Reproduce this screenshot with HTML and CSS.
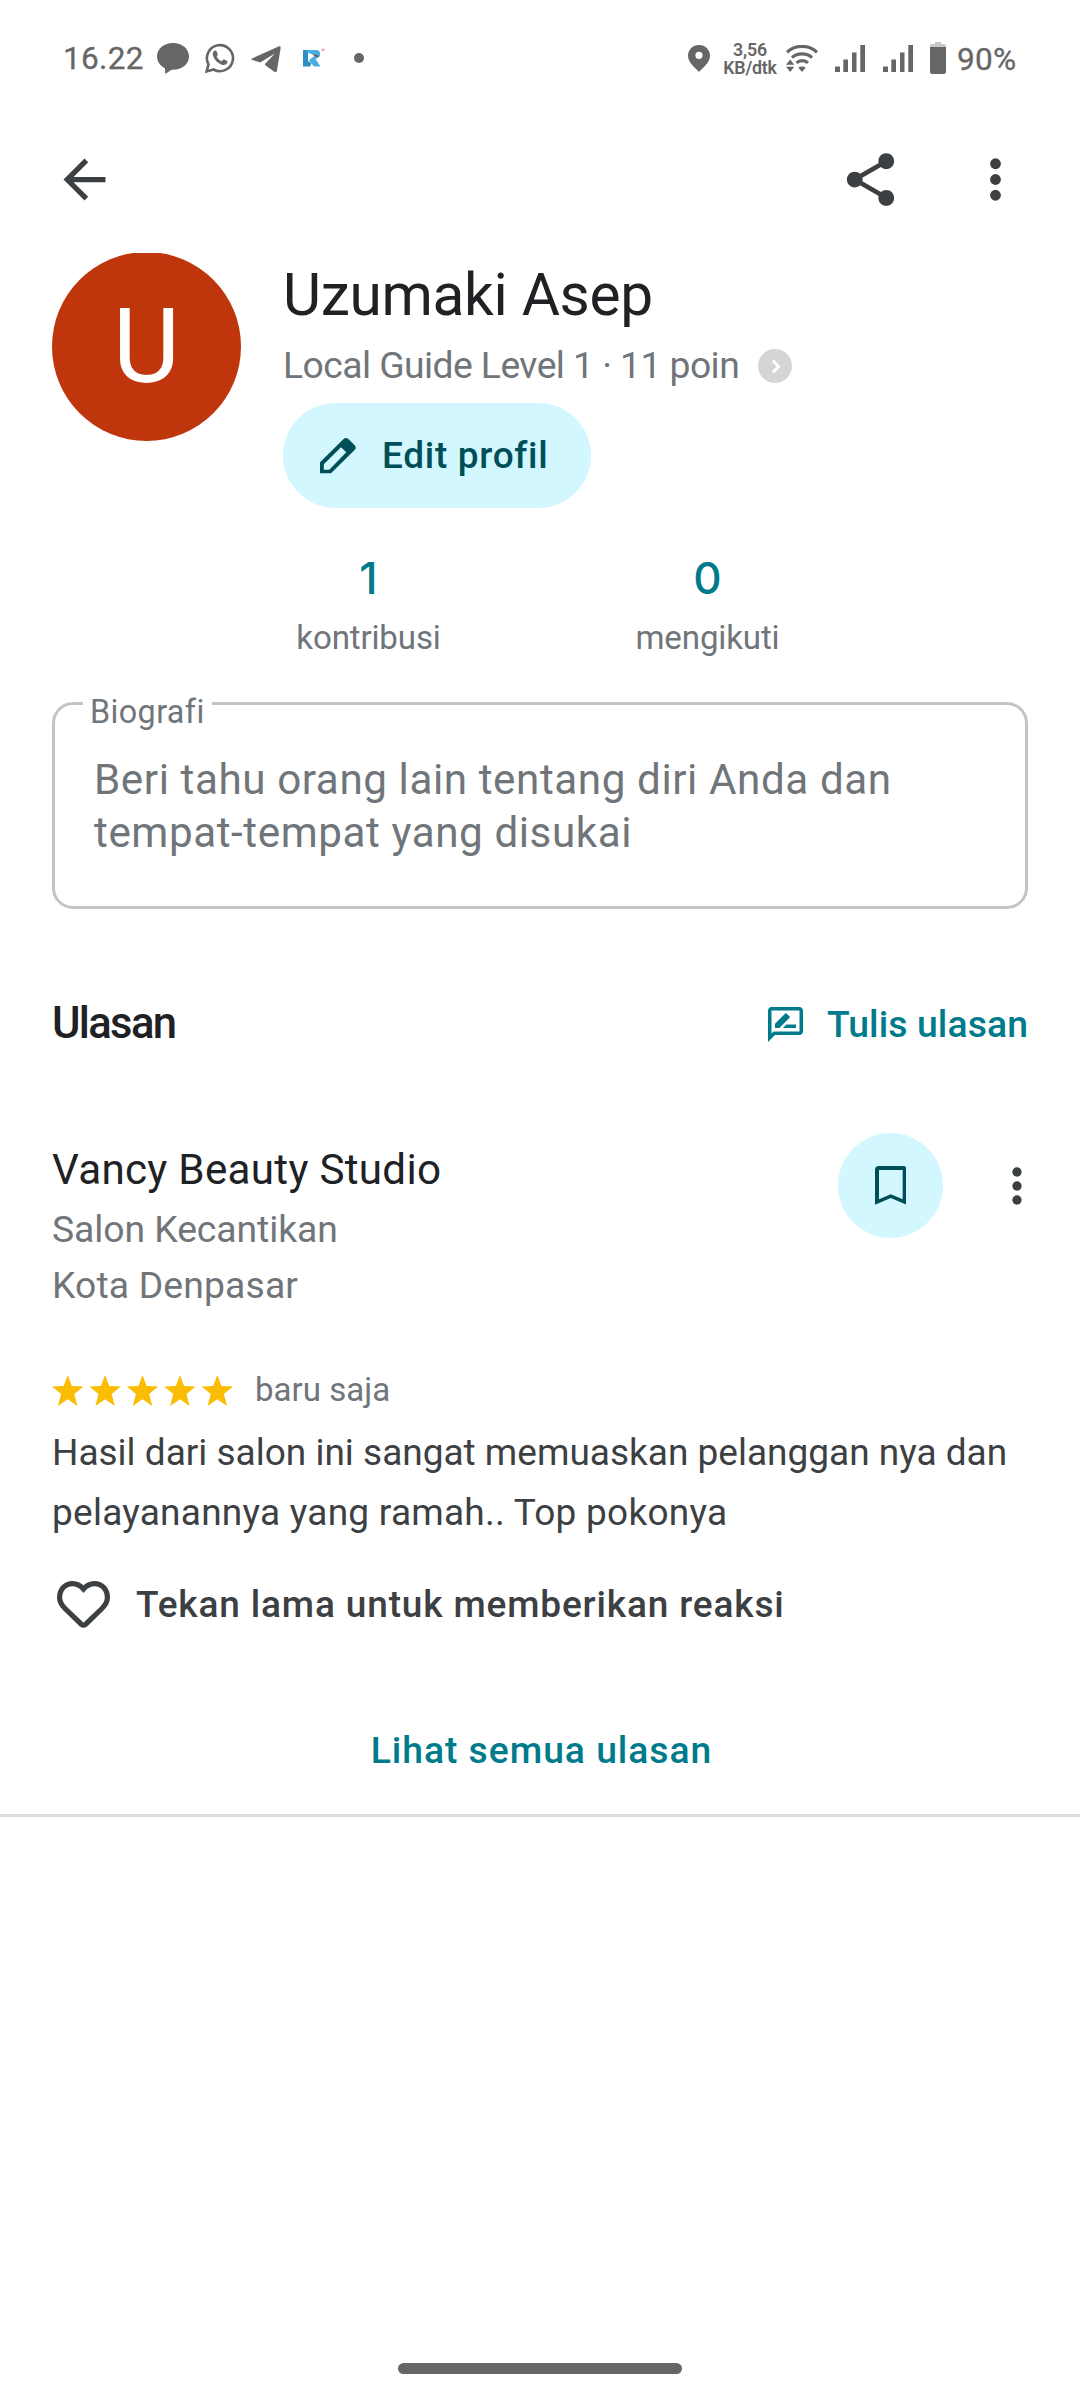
FILE: index.html
```html
<!DOCTYPE html>
<html lang="id">
<head>
<meta charset="utf-8">
<title>Profil</title>
<link rel="stylesheet" href="styles.css">
</head>
<body>
<div class="screen">
  <header class="status">
    <div class="status-left">
      <span class="clock">16.22</span>
      <svg class="ic-chat" viewBox="0 0 32 31"><path d="M16 0C7 0 0 5.800 0 13.500C0 18.500 3 22.800 8 25.200L8.300 31L14.500 26.800C25 27.200 32 21 32 13.500C32 5.800 25 0 16 0Z"/></svg>
      <svg class="ic-wa" viewBox="0 0 30 30"><path d="M1.600 28.400L3.500 21.300A13 13 0 1 1 8.600 26.500Z" fill="none" stroke="currentColor" stroke-width="2.600"/><path d="M9.800 7.600C8 8.500 7.400 10.300 7.900 12.300C9.200 16.800 13.200 20.900 17.800 22C20 22.400 22 21.300 22.400 19.300C22.600 18.400 22.300 18.100 21.700 17.800L19.200 16.600C18.600 16.400 18.200 16.500 17.800 17L16.800 18.200C14.500 17.300 12.700 15.600 11.600 13.400L12.500 12.200C12.800 11.800 12.800 11.400 12.600 10.900L11.600 8.400C11.300 7.600 10.600 7.300 9.800 7.600Z"/></svg>
      <svg class="ic-tg" viewBox="0 0 30 27"><path d="M1.200 12.400L27.500 .6C29 0 29.800 .6 29.600 2.200L26 24.200C25.700 26.200 24.500 26.600 23 25.500L14.600 19.400C13.800 18.800 13.800 18.200 14.500 17.500L23.800 7.400L10.800 15.600C9.800 16.200 9 16.300 7.800 15.900L1.400 14C.1 13.600 0 12.900 1.200 12.400Z"/></svg>
      <svg class="ic-r" viewBox="0 0 22 20"><path d="M0 2H5V13L8.500 15.500L7 18.500H0Z" fill="#2e8fc4"/><path d="M4 2H12.500C16 2 17.800 4 17 7C16.200 9.800 14 10.500 12.500 11L17.500 18.500H11L6 12.800C8 9.800 11 8.500 13 7.500L4 4.500Z" fill="#4aaede"/><path d="M9 6L17 8L13 9Z" fill="#6a5148"/><circle cx="20" cy="1.800" r="1.500" fill="#f0a9a4"/></svg>
      <span class="more-dot"></span>
    </div>
    <div class="status-right">
      <svg class="ic-pin" viewBox="0 0 22 27"><path fill-rule="evenodd" d="M11 0C4.800 0 0 4.700 0 10.700C0 17.500 7 22.500 11 27C15 22.500 22 17.500 22 10.700C22 4.700 17.200 0 11 0ZM11 6.700A3.600 3.600 0 1 1 11 13.900A3.600 3.600 0 1 1 11 6.700Z"/></svg>
      <span class="speed">3,56<br>KB/dtk</span>
      <svg class="ic-wifi" viewBox="0 0 32 27"><g fill="none" stroke="currentColor" stroke-width="3.200"><path d="M1 7.200C9.500-.6 22.500-.6 31 7.200"/><path d="M6 12.600C11.500 7.600 20.500 7.600 26 12.600"/><path d="M10.500 17.800C13.500 15 19 15 22 17.800"/></g><path d="M16 27L12.300 22.800C14.500 21 17.500 21 19.700 22.800ZM4.200 14.500L8.300 19.800H0ZM4.200 27L0 21.700H8.300Z"/></svg>
      <svg class="ic-sig" viewBox="0 0 30 27"><path d="M0 21.500H5V27H0ZM8.300 14.500H13V27H8.300ZM17 7.500H21.500V27H17ZM25.300 0H30V27H25.300Z"/></svg>
      <svg class="ic-sig second" viewBox="0 0 30 27"><path d="M0 21.500H5V27H0ZM8.300 14.500H13V27H8.300ZM17 7.500H21.500V27H17ZM25.300 0H30V27H25.300Z"/></svg>
      <svg class="ic-bat" viewBox="0 0 16 32"><path d="M0 6V4Q0 2 2 2H5V0H11V2H14Q16 2 16 4V6Z" fill="#c8c8c8"/><path d="M0 5H16V29.500Q16 32 13.500 32H2.500Q0 32 0 29.500Z"/></svg>
      <span class="percent">90%</span>
    </div>
  </header>

  <nav class="toolbar">
    <svg class="icon" viewBox="0 0 24 24"><path d="M20 11H7.830l5.590-5.590L12 4l-8 8 8 8 1.410-1.410L7.830 13H20v-2z"/></svg>
    <svg class="icon share" viewBox="0 0 24 24"><path d="M18 16c-.8 0-1.500.3-2 .8l-7.100-4.100c.1-.2.100-.5.100-.7s0-.5-.1-.7L16 7.200c.5.500 1.200.8 2 .8 1.700 0 3-1.300 3-3s-1.300-3-3-3-3 1.300-3 3c0 .2 0 .5.100.7L8 9.800C7.500 9.300 6.800 9 6 9c-1.700 0-3 1.300-3 3s1.300 3 3 3c.8 0 1.500-.3 2-.8l7.100 4.100c-.1.200-.1.500-.1.700 0 1.700 1.300 3 3 3s3-1.300 3-3-1.300-3-3-3z"/></svg>
    <svg class="icon" viewBox="0 0 24 24"><circle cx="12" cy="6" r="2.050"/><circle cx="12" cy="12" r="2.050"/><circle cx="12" cy="18" r="2.050"/></svg>
  </nav>

  <main>
    <section class="profile">
      <div class="avatar">U</div>
      <div class="identity">
        <h1 class="name">Uzumaki Asep</h1>
        <div class="level"><span>Local Guide Level 1 · 11 poin</span>
          <svg class="chevron" viewBox="0 0 34 34"><circle cx="17" cy="17" r="17" fill="#d5d5d5"/><path d="M14.800 11.500L20.600 17.500L14.800 23.500" fill="none" stroke="#fff" stroke-width="3"/></svg>
        </div>
        <button class="edit">
          <svg class="pencil" viewBox="0 0 36 36"><path fill-rule="evenodd" d="M0 35.300V24.300L23.600 1Q26-1 28.400 1L34.600 7.200Q37 9.600 34.600 12L11 35.300ZM3.800 31.700H9.300L26.300 14.300L21 9.200L3.800 26.300Z"/></svg>
          <span>Edit profil</span>
        </button>
      </div>
    </section>

    <section class="stats">
      <div class="stat"><b>1</b><span>kontribusi</span></div>
      <div class="stat"><b>0</b><span>mengikuti</span></div>
    </section>

    <section class="bio">
      <span class="bio-label">Biografi</span>
      <p class="bio-text">Beri tahu orang lain tentang diri Anda dan<br>tempat-tempat yang disukai</p>
    </section>

    <section class="reviews-head">
      <h2 class="title">Ulasan</h2>
      <a class="write"><svg class="ic-write" viewBox="2 2 20 20"><path d="M20 2H4c-1.100 0-2 .9-2 2v18l4-4h14c1.100 0 2-.9 2-2V4c0-1.100-.9-2-2-2zm0 14H5.170L4 17.170V4h16v12z"/><path d="M10.500 14H18v-2h-5.500zm3.860-5.870c.2-.2.200-.51 0-.71l-1.770-1.770c-.2-.2-.51-.2-.71 0L6 11.530V14h2.470l5.890-5.870z"/></svg><span>Tulis ulasan</span></a>
    </section>

    <article>
      <div class="place">
        <div class="place-info">
          <h3 class="place-name">Vancy Beauty Studio</h3>
          <p class="place-kind">Salon Kecantikan</p>
          <p class="place-city">Kota Denpasar</p>
        </div>
        <div class="place-actions">
          <span class="save"><svg class="ic-save" viewBox="0 0 31.700 38.700"><path fill-rule="evenodd" d="M0 38.700V4Q0 0 4 0H27.700Q31.700 0 31.700 4V38.700L15.800 32ZM4 33.200V4H27.700V33.200L15.800 28.300Z"/></svg></span>
          <svg class="ic-more" viewBox="0 0 24 24"><circle cx="12" cy="6" r="2"/><circle cx="12" cy="12" r="2"/><circle cx="12" cy="18" r="2"/></svg>
        </div>
      </div>
      <div class="rating">
        <svg class="stars" viewBox="0 0 181 31">
          <defs><path id="star" d="M15.700 0L19.800 11L31.400 11.500L22.300 18.900L25.400 31L15.700 24.300L6 31L9.100 18.900L0 11.500L11.600 11Z"/></defs>
          <use href="#star"/><use href="#star" x="37.400"/><use href="#star" x="74.800"/><use href="#star" x="112.200"/><use href="#star" x="149.600"/>
        </svg>
        <span class="when">baru saja</span>
      </div>
      <p class="review">Hasil dari salon ini sangat memuaskan pelanggan nya dan<br><span class="review-end">pelayanannya yang ramah.. Top pokonya</span></p>
      <div class="react">
        <svg class="heart" viewBox="0 0 53 47"><path d="M26.500 8C23 4 19 2.600 15.500 2.600C8 2.600 2.600 8.600 2.600 16.500C2.600 21 4.500 24 8 27.500L24.300 43.200Q26.500 45 28.700 43.200L45 27.500C48.500 24 50.400 21 50.400 16.500C50.400 8.600 45 2.600 37.500 2.600C34 2.600 30 4 26.500 8Z"/></svg>
        <span>Tekan lama untuk memberikan reaksi</span>
      </div>
    </article>
    <a class="all">Lihat semua ulasan</a>
  </main>
  <hr class="divider">
  <footer class="gesture"><span class="handle"></span></footer>
</div>
</body>
</html>
```
FILE: styles.css
```css
* { box-sizing: border-box; margin: 0; padding: 0; }
body { background: #fff; font-family: Roboto, "Noto Sans", sans-serif; color: #202124; }
svg { display: block; flex: none; fill: currentColor; }
.screen { width: 1080px; height: 2400px; display: flex; flex-direction: column; overflow: hidden; background: #fff; white-space: nowrap; }

.status { height: 116px; display: flex; justify-content: space-between; padding: 0 64px 0 63px; color: #666; }
.status-left, .status-right { display: flex; align-items: center; }
.clock { width: 94px; font-size: 31.600px; letter-spacing: .3px; -webkit-text-stroke: .3px currentColor; }
.ic-chat { width: 32px; height: 31px; }
.ic-wa { width: 30px; height: 30px; margin-left: 16px; }
.ic-tg { width: 30px; height: 27px; margin: 3px 0 0 16px; }
.ic-r { width: 22px; height: 20px; margin-left: 22px; }
.more-dot { width: 10px; height: 10px; margin-left: 29px; border-radius: 50%; background: #666; }
.ic-pin { width: 22px; height: 27px; }
.speed { width: 56px; margin: 2px 0 0 12px; font-size: 17.800px; line-height: 18px; font-weight: 600; text-align: center; letter-spacing: -.2px; }
.ic-wifi { width: 32px; height: 27px; margin-left: 8px; }
.ic-sig { width: 30px; height: 27px; margin-left: 17px; }
.ic-sig.second { margin-left: 18px; }
.ic-bat { width: 16px; height: 32px; margin-left: 17px; }
.percent { width: 59px; margin: 3px 0 0 11px; font-size: 31.600px; letter-spacing: .2px; -webkit-text-stroke: .3px currentColor; }

.toolbar { height: 127px; display: flex; align-items: center; padding: 0 53px; color: #3c4043; }
.icon { width: 63px; height: 63px; }
.icon.share { margin: 0 62px 0 auto; }

main { padding: 9px 52px 0; display: flex; flex-direction: column; }
.profile { display: flex; gap: 42px; align-items: flex-start; }
.avatar { width: 189px; height: 189px; border-radius: 50%; background: #bf360c; color: #fff; font-size: 103px; line-height: 190px; text-align: center; clip-path: inset(1px 0 0 0); }
.identity { padding-top: 5px; }
.name { height: 76px; font-size: 58.600px; line-height: 76px; font-weight: 400; letter-spacing: -.3px; }
.level { margin-top: 8px; height: 48px; display: flex; align-items: center; gap: 18.500px; font-size: 37.300px; line-height: 48px; letter-spacing: -.56px; color: #70757a; }
.chevron { width: 34px; height: 34px; margin-top: 2px; }
.edit { margin-top: 14px; width: 308px; height: 105px; padding-left: 37px; display: flex; align-items: center; gap: 26px; border: 0; border-radius: 53px; background: #d2f7ff; color: #004f58; font: 500 37px Roboto, sans-serif; letter-spacing: .7px; }
.pencil { width: 36px; height: 36px; }

.stats { margin: 40px 0 0 147px; display: grid; grid-template-columns: 339px 339px; }
.stat { display: flex; flex-direction: column; text-align: center; }
.stat b { font-family: Inter, Roboto, sans-serif; font-size: 44px; line-height: 60px; font-weight: 500; color: #007b8b; }
.stat span { margin-top: 6px; font-size: 33.100px; line-height: 48px; letter-spacing: -.15px; color: #70757a; }

.bio { position: relative; margin-top: 40px; height: 207px; padding: 48px 0 0 39px; border: 3px solid #c4c4c4; border-radius: 21px; color: #70757a; }
.bio-label { position: absolute; left: 28px; top: -16px; width: 129px; padding-left: 7px; background: #fff; font-size: 32.300px; line-height: 46px; letter-spacing: .4px; }
.bio-text { font-size: 42.200px; line-height: 53px; letter-spacing: .58px; }

.reviews-head { margin-top: 85px; height: 60px; display: flex; justify-content: space-between; align-items: center; }
.title { font-size: 43.600px; line-height: 60px; font-weight: 500; letter-spacing: -1.670px; }
.write { display: flex; align-items: center; gap: 24px; color: #007b8b; font-size: 37.300px; font-weight: 500; letter-spacing: .1px; }
.ic-write { width: 35px; height: 35px; }

.place { margin-top: 79px; height: 180px; display: flex; justify-content: space-between; }
.place-info { padding-top: 9px; }
.place-name { font-size: 42.200px; line-height: 56px; font-weight: 400; letter-spacing: .28px; }
.place-kind, .place-city { font-size: 37.300px; line-height: 56px; color: #70757a; }
.place-kind { margin-top: 3px; letter-spacing: -.06px; }
.place-city { letter-spacing: .15px; }
.place-actions { height: 105px; margin-right: -17px; display: flex; align-items: center; gap: 46px; }
.save { width: 105px; height: 105px; display: flex; align-items: center; justify-content: center; border-radius: 50%; background: #d2f7ff; color: #004f58; }
.ic-save { width: 31.700px; height: 38.700px; }
.ic-more { width: 56px; height: 56px; margin-top: 1px; color: #3c4043; }

.rating { margin-top: 54px; height: 46px; display: flex; align-items: center; gap: 22px; }
.stars { width: 181px; height: 31px; fill: #fbbc04; }
.when { font-size: 33.100px; line-height: 46px; color: #70757a; }
.review { margin-top: 10px; font-size: 37px; line-height: 60px; color: #3c4043; letter-spacing: 0; }
.review-end { letter-spacing: .25px; }
.react { margin-top: 31px; height: 60px; padding-left: 5px; display: flex; align-items: center; gap: 26px; color: #3c4043; font-size: 37px; font-weight: 500; letter-spacing: .85px; }
.heart { width: 53px; height: 47px; fill: none; stroke: currentColor; stroke-width: 5.200px; }
.all { margin-top: 86px; padding-left: 3px; text-align: center; font-size: 37.300px; line-height: 60px; font-weight: 500; letter-spacing: .96px; color: #007b8b; }

.divider { flex: none; margin-top: 34px; height: 3px; border: 0; background: #dadce0; }
.gesture { margin-top: auto; height: 37px; display: flex; justify-content: center; align-items: flex-start; }
.handle { width: 284px; height: 11px; border-radius: 6px; background: #666; }
```
